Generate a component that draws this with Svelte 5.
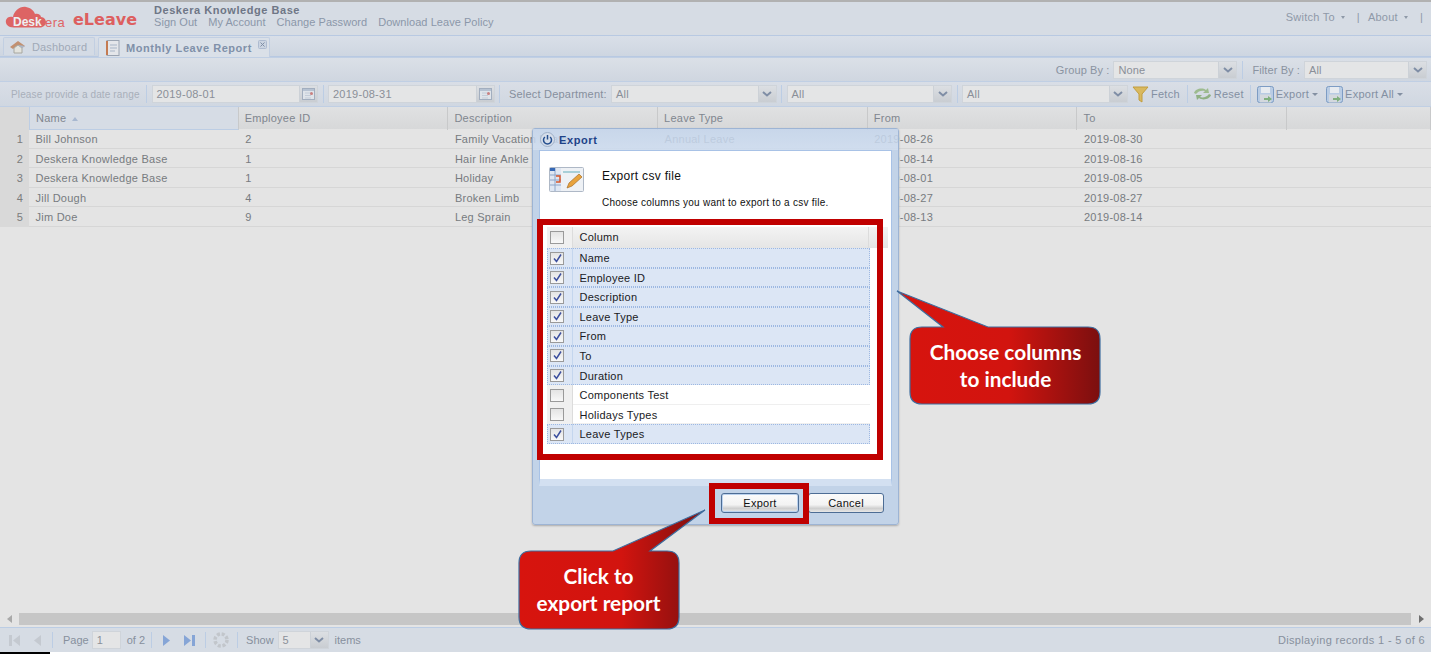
<script lang="ts">
  const links = ['Sign Out', 'My Account', 'Change Password', 'Download Leave Policy'];
  const columns = ['Name', 'Employee ID', 'Description', 'Leave Type', 'From', 'To'];
  const rows = [
    ['Bill Johnson', '2', 'Family Vacation Leave', 'Annual Leave', '2019-08-26', '2019-08-30'],
    ['Deskera Knowledge Base', '1', 'Hair line Ankle Fracture', '', '2019-08-14', '2019-08-16'],
    ['Deskera Knowledge Base', '1', 'Holiday', '', '2019-08-01', '2019-08-05'],
    ['Jill Dough', '4', 'Broken Limb', '', '2019-08-27', '2019-08-27'],
    ['Jim Doe', '9', 'Leg Sprain', '', '2019-08-13', '2019-08-14']
  ];
  const exportCols = [
    { name: 'Name', on: true },
    { name: 'Employee ID', on: true },
    { name: 'Description', on: true },
    { name: 'Leave Type', on: true },
    { name: 'From', on: true },
    { name: 'To', on: true },
    { name: 'Duration', on: true },
    { name: 'Components Test', on: false },
    { name: 'Holidays Types', on: false },
    { name: 'Leave Types', on: true }
  ];
</script>

{#snippet arrow()}
  <span class="trigger">
    <svg width="10" height="6" viewBox="0 0 10 6"><path d="M1 1l4 3.500L9 1" fill="none" stroke="#7f8ea6" stroke-width="2" /></svg>
  </span>
{/snippet}

{#snippet calendar()}
  <span class="trigger">
    <svg width="13" height="12" viewBox="0 0 13 12">
      <rect x=".5" y=".5" width="12" height="11" fill="#dfe4ea" stroke="#a2aebf" />
      <rect x="1" y="1" width="11" height="2" fill="#b6c2d2" />
      <path d="M3 5h6M3 7.500h6M3 10h6" stroke="#c3ccd8" />
      <circle cx="9.500" cy="5.500" r="1.500" fill="#c98080" />
    </svg>
  </span>
{/snippet}

{#snippet save()}
  <svg width="17" height="17" viewBox="0 0 17 17">
    <rect x=".5" y=".5" width="16" height="16" rx="2" fill="#b9cce4" stroke="#7d9cc4" />
    <rect x="4" y="1" width="9" height="6" fill="#e7ebf0" />
    <rect x="3" y="8.500" width="11" height="8" fill="#d3d8de" />
    <path d="M7 12h4v-2l4 3-4 3v-2H7z" fill="#7fb07f" />
  </svg>
{/snippet}

<div class="page">
  <header class="top">
    <div class="logo">
      <svg class="cloud" width="42" height="22" viewBox="0 0 42 22">
        <path d="M9 21.500C3 21.500 0 18 1 14 2 11 5 10 8 11 9 5 15 0 21 1 26 2 29 5 30 8 33 7 36 9 36 11 39 11 41 14 41 16 41 19 38 21.500 35 21.500Z" fill="#dd6464" />
      </svg>
      <span class="desk">Desk</span><span class="era">era</span>
      <span class="eleave">eLeave</span>
    </div>
    <div class="company">
      <strong>Deskera Knowledge Base</strong>
      <nav>
        {#each links as link}
          <span>{link}</span>
        {/each}
      </nav>
    </div>
    <div class="top-right">
      <span>Switch To</span><i class="caret"></i><b>|</b><span>About</span><i class="caret"></i><b class="last-bar">|</b>
    </div>
  </header>

  <div class="tabs">
    <div class="tab">
      <svg width="17" height="14" viewBox="0 0 17 14">
        <path d="M1 7l8-6 7 5-3 2-4-3-5 4z" fill="#c29070" />
        <path d="M5 8l4-3 4 3v5H5z" fill="#e3e3dd" stroke="#a7a7a0" />
        <path d="M9 5l7 1-3 2z" fill="#a9b7c9" />
      </svg>
      Dashboard
    </div>
    <div class="tab active">
      <svg width="15" height="16" viewBox="0 0 15 16">
        <rect x="2" y=".5" width="12" height="15" fill="#e4e6ea" stroke="#9ba4b2" />
        <rect x="1" y="1" width="2" height="14" fill="#c47b52" />
        <path d="M5 5h7M5 8h7M5 11h5" stroke="#a8b5c7" />
      </svg>
      <span>Monthly Leave Report</span>
      <em class="close">
        <svg width="9" height="9" viewBox="0 0 9 9">
          <rect x=".5" y=".5" width="8" height="8" rx="1" fill="#cbd4e1" stroke="#aebbd0" />
          <path d="M2.500 2.500l4 4m0-4l-4 4" stroke="#7f8ea6" />
        </svg>
      </em>
    </div>
  </div>

  <div class="bar group-bar">
    <label>Group By :</label>
    <div class="combo group">None{@render arrow()}</div>
    <i class="sep"></i>
    <label>Filter By :</label>
    <div class="combo filter">All{@render arrow()}</div>
  </div>

  <div class="bar tools">
    <span class="hint">Please provide a date range</span>
    <i class="sep"></i>
    <div class="combo date">2019-08-01{@render calendar()}</div>
    <i class="sep"></i>
    <div class="combo date">2019-08-31{@render calendar()}</div>
    <i class="sep"></i>
    <label class="dept">Select Department:</label>
    <div class="combo dep">All{@render arrow()}</div>
    <i class="sep"></i>
    <div class="combo dep">All{@render arrow()}</div>
    <i class="sep"></i>
    <div class="combo dep">All{@render arrow()}</div>
    <span class="btn fetch">
      <svg width="17" height="17" viewBox="0 0 17 17"><path d="M1 1h15l-6 7v8l-3-2V8z" fill="#d9b95f" stroke="#c29d3e" /></svg>
      Fetch
    </span>
    <i class="sep"></i>
    <span class="btn reset">
      <svg width="19" height="14" viewBox="0 0 19 14">
        <path d="M1 6c1-4 8-6 12-3l2-2 1 5h-6l2-2C9 3 5 4 3 7z" fill="#9dbb8f" />
        <path d="M18 8c-1 4-8 6-12 3l-2 2-1-5h6l-2 2c3 1 7 0 9-3z" fill="#8fb083" />
      </svg>
      Reset
    </span>
    <i class="sep"></i>
    <span class="btn exp">{@render save()}Export<i class="down"></i></span>
    <span class="btn exp-all">{@render save()}Export All<i class="down"></i></span>
  </div>

  <div class="grid-head">
    <div class="num"></div>
    {#each columns as col, i}
      <div class="col" class:sorted={i === 0}>
        {col}
        {#if i === 0}<i class="sort"></i>{/if}
      </div>
    {/each}
    <div class="col rest"></div>
  </div>

  <div class="grid-body">
    {#each rows as row, i}
      <div class="row">
        <div class="num">{i + 1}</div>
        {#each row as cell}
          <div class="col">{cell}</div>
        {/each}
      </div>
    {/each}
  </div>

  <div class="hscroll">
    <span class="end">
      <svg width="5" height="8" viewBox="0 0 5 8"><path d="M5 0v8L0 4z" fill="#a9a9a9" /></svg>
    </span>
    <span class="track"></span>
    <span class="end">
      <svg width="5" height="8" viewBox="0 0 5 8"><path d="M0 0v8l5-4z" fill="#6f6f6f" /></svg>
    </span>
  </div>

  <footer class="pager">
    <svg class="first" width="11" height="13" viewBox="0 0 11 13"><path d="M0 1h3v11H0zM11 1v11L4 6.500z" fill="#c4c9d0" /></svg>
    <svg class="prev" width="7" height="13" viewBox="0 0 7 13"><path d="M7 1v11L0 6.500z" fill="#c4c9d0" /></svg>
    <i class="sep sep-a"></i>
    <span class="page-label">Page</span>
    <div class="combo page-input">1</div>
    <span>of 2</span>
    <i class="sep sep-b"></i>
    <svg class="next" width="7" height="13" viewBox="0 0 7 13"><path d="M0 1v11l7-5.500z" fill="#86a5d6" /></svg>
    <svg class="last" width="11" height="13" viewBox="0 0 11 13"><path d="M0 1v11l7-5.500zM8 1h3v11H8z" fill="#86a5d6" /></svg>
    <i class="sep sep-c"></i>
    <svg class="spin" width="16" height="16" viewBox="0 0 16 16">
      <circle cx="8" cy="8" r="6" fill="none" stroke="#c2c6cb" stroke-width="3.500" stroke-dasharray="3 1.700" />
    </svg>
    <i class="sep sep-d"></i>
    <span>Show</span>
    <div class="combo size">5{@render arrow()}</div>
    <span>items</span>
    <span class="records">Displaying records 1 - 5 of 6</span>
  </footer>
  <div class="edge"></div>

  <section class="modal">
    <div class="modal-title">
      <svg width="15" height="15" viewBox="0 0 15 15">
        <circle cx="7.500" cy="7.500" r="7" fill="#d6deea" stroke="#9fb0c8" />
        <path d="M4.900 5A4 4 0 1 0 10.100 5" fill="none" stroke="#254f8f" stroke-width="1.500" />
        <path d="M7.500 3v4.500" stroke="#254f8f" stroke-width="1.500" />
      </svg>
      Export
    </div>
    <div class="modal-intro">
      <svg class="sheet" width="35" height="25" viewBox="0 0 35 25">
        <rect x=".5" y=".5" width="34" height="24" rx="1" fill="#eef1f5" stroke="#aeb8c6" />
        <rect x="1" y="1" width="11" height="23" fill="#dfe7f3" />
        <path d="M1 8h11M1 13h11M1 18h11M6 1v23" stroke="#8ea6c9" />
        <rect x="1" y="1" width="5" height="3" fill="#3668b5" />
        <path d="M7 9h4v6H7" fill="none" stroke="#d8572b" stroke-width="1.500" />
        <path d="M14 5h17" stroke="#a8cfd8" stroke-width="2" />
        <path d="M18 21l2-5 10-9 3 3-10 9z" fill="#e8a33d" stroke="#a8702a" stroke-width=".7" />
      </svg>
      <div>
        <h2>Export csv file</h2>
        <p>Choose columns you want to export to a csv file.</p>
      </div>
    </div>
    <div class="picker">
      <div class="picker-head">
        <div class="check-cell"><span class="box"></span></div>
        <div class="picker-name">Column</div>
        <div class="picker-rest"></div>
      </div>
      {#each exportCols as col}
        <div class="picker-row" class:on={col.on}>
          <div class="check-cell">
            <span class="box">
              {#if col.on}
                <svg width="11" height="11" viewBox="0 0 11 11"><path d="M2 5.500l2.500 3L9 1.500" fill="none" stroke="#3c4f9e" stroke-width="1.500" /></svg>
              {/if}
            </span>
          </div>
          <div class="picker-name">{col.name}</div>
        </div>
      {/each}
    </div>
    <div class="modal-foot">
      <button class="default">Export</button>
      <button>Cancel</button>
    </div>
  </section>

  <div class="mark mark-list"></div>
  <div class="mark mark-export"></div>

  <svg class="callout" width="1431" height="654" viewBox="0 0 1431 654">
    <defs>
      <linearGradient id="redA" x1="0" x2="1" y1="0" y2="0">
        <stop offset="0" stop-color="#d7140e" />
        <stop offset=".55" stop-color="#d2140f" />
        <stop offset="1" stop-color="#7b0f0f" />
      </linearGradient>
    </defs>
    <path class="bubble" d="M922 327H943L897 291L988 327H1088Q1100 327 1100 339V392Q1100 404 1088 404H922Q910 404 910 392V339Q910 327 922 327Z" />
    <text x="1005.500" y="360">Choose columns</text>
    <text x="1005.500" y="387">to include</text>
    <path class="bubble" d="M531 551H613L705 510L650 551H667Q679 551 679 563V617Q679 629 667 629H531Q519 629 519 617V563Q519 551 531 551Z" />
    <text x="598.500" y="584">Click to</text>
    <text x="598.500" y="611">export report</text>
  </svg>
</div>

<style>
  :global(body) {
    margin: 0;
    background: #e4e4e4;
  }

  .page {
    position: relative;
    display: flex;
    flex-direction: column;
    width: 1431px;
    height: 654px;
    overflow: hidden;
    font-family: "Liberation Sans", Arial, sans-serif;
    font-size: 11px;
    letter-spacing: 0.25px;
    color: #7f8794;
  }

  svg {
    display: block;
    flex: none;
  }

  .top {
    display: flex;
    flex: none;
    height: 33px;
    border-top: 2px solid #b1b1b1;
    background: #d6dce4;
  }

  .logo {
    position: relative;
    width: 154px;
    flex: none;
  }

  .cloud {
    position: absolute;
    left: 5px;
    top: 4px;
  }

  .desk,
  .era,
  .eleave {
    position: absolute;
    font-weight: 700;
    letter-spacing: 0;
  }

  .desk {
    left: 13px;
    top: 13px;
    color: #eef0f2;
    font-size: 12px;
  }

  .era {
    left: 45px;
    top: 13px;
    color: #df6666;
    font-weight: 400;
    font-size: 13px;
    letter-spacing: 0.5px;
  }

  .eleave {
    left: 73px;
    top: 8px;
    color: #dd5f5f;
    font-family: "DejaVu Sans", sans-serif;
    font-size: 16px;
  }

  .company {
    padding-top: 2px;
    line-height: 13px;
  }

  .company strong {
    display: block;
    color: #6e7686;
    letter-spacing: 0.55px;
  }

  nav {
    display: flex;
    gap: 11px;
    margin-top: -1px;
    color: #8b97a9;
    letter-spacing: 0.05px;
  }

  .top-right {
    display: flex;
    align-items: flex-start;
    margin-left: auto;
    padding: 9px 8px 0 0;
    line-height: 13px;
    color: #8f99a8;
  }

  .top-right b {
    margin: 0 8px 0 12px;
    font-weight: 400;
  }

  .top-right .last-bar {
    margin-right: 0;
  }

  .caret {
    width: 0;
    height: 0;
    margin: 5px 0 0 6px;
    border: 2.500px solid transparent;
    border-top: 3px solid #8f99a8;
    border-bottom: 0;
  }

  .tabs {
    display: flex;
    flex: none;
    gap: 3px;
    align-items: flex-end;
    height: 20px;
    padding-left: 3px;
    border-top: 1px solid #b8c9e2;
    border-bottom: 1px solid #b8c9e2;
    background: linear-gradient(#d9dfe8, #ced6e1);
  }

  .tab {
    display: flex;
    gap: 6px;
    align-items: center;
    box-sizing: border-box;
    width: 92px;
    height: 18px;
    margin-bottom: 1px;
    padding-left: 5px;
    border: 1px solid #c2cfe2;
    border-bottom: 0;
    border-radius: 2px 2px 0 0;
    background: #d4dbe5;
    color: #a0a9b7;
    letter-spacing: 0.15px;
  }

  .tab.active {
    position: relative;
    width: 172px;
    height: 20px;
    margin-bottom: -1px;
    background: #dae0e8;
    color: #8090a9;
    font-weight: 700;
    letter-spacing: 0.55px;
  }

  .tab.active svg {
    margin-left: 1px;
  }

  .close {
    position: absolute;
    right: 2px;
    top: 2px;
  }

  .bar {
    display: flex;
    flex: none;
    align-items: center;
    border-top: 1px solid #c0cfe4;
    background: linear-gradient(#dbe0e7, #cfd6e0);
  }

  .group-bar {
    height: 23px;
    justify-content: flex-end;
    padding-right: 4px;
    color: #8a93a1;
    letter-spacing: 0.1px;
  }

  .group-bar label {
    margin-right: 4px;
  }

  .group-bar .sep {
    margin: 0 9px 0 5px;
  }

  .tools {
    height: 24px;
    padding-left: 11px;
    border-bottom: 1px solid #c0cfe4;
    background: linear-gradient(#d9dee6, #d0d7e1);
  }

  .sep {
    flex: none;
    width: 1px;
    height: 18px;
    background: #bccde4;
  }

  .combo {
    display: flex;
    flex: none;
    align-items: center;
    justify-content: space-between;
    box-sizing: border-box;
    height: 18px;
    padding-left: 4px;
    border: 1px solid #cfd4da;
    background: #e4e5e6;
    line-height: 16px;
    color: #8a8f98;
  }

  .trigger {
    display: flex;
    align-items: center;
    justify-content: center;
    width: 17px;
    height: 16px;
    border-left: 1px solid #ccd1d7;
    background: linear-gradient(#dcdfe3, #c9cdd2);
  }

  .group {
    width: 124px;
  }

  .filter {
    width: 123px;
  }

  .date {
    width: 166.500px;
  }

  .dep {
    width: 165.500px;
  }

  .tools .date,
  .tools .dep {
    margin: 0 4.500px;
  }

  .hint {
    width: 135px;
    color: #a8afba;
    font-size: 10px;
    letter-spacing: 0.13px;
  }

  .dept {
    margin-left: 9px;
    width: 97.500px;
    white-space: nowrap;
    color: #868f9d;
    letter-spacing: 0.2px;
  }

  .btn {
    display: flex;
    flex: none;
    align-items: center;
    gap: 2px;
    color: #8390a2;
  }

  .fetch {
    margin-right: 7px;
  }

  .reset {
    margin: 0 6px 0 5px;
  }

  .exp {
    margin: 0 8px 0 6px;
  }

  .down {
    width: 0;
    height: 0;
    margin-left: 1px;
    border: 3px solid transparent;
    border-top: 3px solid #8390a2;
    border-bottom: 0;
  }

  .grid-head,
  .row {
    display: grid;
    flex: none;
    grid-template-columns: 29px repeat(6, 209.700px) 1fr;
  }

  .grid-head {
    height: 22px;
    background: linear-gradient(#e0e1e2, #d7d8d9);
    line-height: 22px;
    color: #80868f;
  }

  .grid-head .col {
    padding-left: 6px;
    border-right: 1px solid #c8c9ca;
  }

  .grid-head .sorted {
    border-bottom: 1px solid #bccde4;
    border-left: 1px solid #bccde4;
    background: #d6dce5;
  }

  .sort {
    display: inline-block;
    width: 0;
    height: 0;
    margin: 0 0 1px 2px;
    border: 3.500px solid transparent;
    border-bottom: 4px solid #a8b8d0;
    border-top: 0;
  }

  .num {
    background: #d9d9d9;
    text-align: right;
    padding-right: 6px;
    color: #7c7c7c;
  }

  .grid-body {
    flex: 1;
    min-height: 0;
  }

  .row {
    box-sizing: border-box;
    height: 19.600px;
    border-bottom: 1px solid #d6d6d6;
    line-height: 20px;
  }

  .row .col {
    padding-left: 6.500px;
    color: #777b80;
    white-space: nowrap;
  }

  .hscroll {
    display: flex;
    flex: none;
    height: 12px;
    margin-bottom: 2px;
  }

  .end {
    display: flex;
    align-items: center;
    justify-content: center;
    flex: none;
    width: 19px;
  }

  .hscroll .end:last-child {
    width: 20px;
  }

  .track {
    flex: 1;
    background: #c6c6c6;
  }

  .pager {
    display: flex;
    flex: none;
    align-items: center;
    height: 24px;
    padding-left: 9px;
    border-top: 1px solid #bccde4;
    background: #d6dce4;
    color: #87909d;
    letter-spacing: 0;
  }

  .edge {
    flex: none;
    height: 2px;
    background: linear-gradient(90deg, #000 50px, #fff 50px);
  }

  .prev {
    margin-left: 14px;
  }

  .pager .sep {
    height: 16px;
  }

  .pager .sep-a {
    margin: 0 10px 0 11px;
  }

  .pager .sep-b {
    margin: 0 11px 0 6px;
  }

  .pager .sep-c {
    margin: 0 7px 0 10px;
  }

  .pager .sep-d {
    margin: 0 8px;
  }

  .page-label {
    margin-right: 3px;
  }

  .page-input {
    width: 29px;
    margin-right: 6px;
  }

  .last {
    margin-left: 14px;
  }

  .size {
    width: 51px;
    margin: 0 6px 0 4px;
  }

  .records {
    margin-left: auto;
    margin-right: 6px;
    letter-spacing: 0.35px;
  }

  .modal {
    position: absolute;
    left: 532px;
    top: 128px;
    box-sizing: border-box;
    display: flex;
    flex-direction: column;
    width: 367px;
    height: 397px;
    border: 1px solid #9db4d4;
    border-radius: 3px;
    background: linear-gradient(transparent 21px, #c2d3e8 21px);
    box-shadow: 0 1px 2px rgba(0, 0, 0, 0.25);
    color: #101010;
  }

  .modal-title {
    display: flex;
    flex: none;
    gap: 4px;
    align-items: center;
    height: 21px;
    padding-left: 7px;
    background: linear-gradient(rgba(195, 212, 235, 0.85), rgba(205, 220, 240, 0.85));
    color: #1e4288;
    font-weight: 700;
    letter-spacing: 0.6px;
  }

  .modal-intro {
    display: flex;
    flex: none;
    box-sizing: border-box;
    height: 69px;
    margin: 0 6px;
    padding: 15px 0 0 9px;
    border: 1px solid #a8c2e6;
    border-bottom: 0;
    background: #fff;
  }

  .sheet {
    margin-top: 1px;
  }

  .modal-intro h2 {
    margin: 0 0 0 18px;
    font-size: 12px;
    font-weight: 400;
    line-height: 20px;
    letter-spacing: 0.3px;
  }

  .modal-intro p {
    margin: 10px 0 0 18px;
    font-size: 10px;
    line-height: 13px;
    letter-spacing: 0.25px;
  }

  .picker {
    flex: none;
    box-sizing: border-box;
    height: 267px;
    margin: 0 6px;
    padding: 8px 3px 0 7px;
    border: 1px solid #a8c2e6;
    border-top: 0;
    border-bottom-width: 7px;
    border-bottom-color: #d3e0f1;
    background: #fff;
  }

  .picker-head,
  .picker-row {
    display: grid;
    grid-template-columns: 25px 298px;
    box-sizing: border-box;
    line-height: 20px;
    color: #1a1a24;
  }

  .picker-head {
    grid-template-columns: 25px 296px 20px;
    height: 21px;
    line-height: 21px;
    background: linear-gradient(#f3f3f3, #e5e5e5);
  }

  .picker-name {
    padding-left: 6.500px;
    border-left: 1px solid #dcdcdc;
  }

  .picker-rest {
    border-left: 1px solid #dcdcdc;
  }

  .picker-row {
    height: 19.600px;
    width: 323px;
    border-bottom: 1px solid #efefef;
  }

  .picker-row.on {
    border-bottom: 0;
    outline: 1px dotted #9db8e2;
    outline-offset: -1px;
    background: #dce6f5;
  }

  .check-cell {
    display: flex;
    align-items: center;
    padding-left: 3px;
    background: #f0f0f0;
  }

  .on .check-cell {
    background: #dce6f5;
  }

  .on .picker-name {
    border-left-color: #c4d6ee;
  }

  .box {
    display: flex;
    align-items: center;
    justify-content: center;
    box-sizing: border-box;
    width: 14px;
    height: 13px;
    border: 1px solid #9a9a9a;
    background: linear-gradient(#e4e4e4, #f8f8f8);
  }

  .modal-foot {
    display: flex;
    flex: 1;
    gap: 9px;
    justify-content: flex-end;
    padding: 7px 14px 0 0;
  }

  .modal-foot button {
    width: 76px;
    height: 20px;
    padding: 0;
    border: 1px solid #4d6d95;
    border-radius: 3px;
    background: linear-gradient(#fbfbfb 0, #f3f3f3 60%, #cfcfcf 80%, #e8e8e8 100%);
    font: inherit;
    letter-spacing: inherit;
    color: #101010;
  }

  .modal-foot .default {
    width: 78px;
    box-shadow: inset 0 0 0 1px #bcd2ee;
  }

  .mark {
    position: absolute;
    box-sizing: border-box;
    border: 6px solid #c00000;
  }

  .mark-list {
    left: 537px;
    top: 219px;
    width: 346px;
    height: 241px;
  }

  .mark-export {
    left: 709px;
    top: 483px;
    width: 100px;
    height: 41px;
  }

  .callout {
    position: absolute;
    left: 0;
    top: 0;
    pointer-events: none;
  }

  .bubble {
    fill: url(#redA);
    stroke: #3e6d9e;
    stroke-width: 1.200;
  }

  .callout text {
    fill: #fff;
    font-family: Lato, "Open Sans", sans-serif;
    font-size: 20.800px;
    font-weight: 700;
    letter-spacing: 0;
    text-anchor: middle;
  }
</style>
